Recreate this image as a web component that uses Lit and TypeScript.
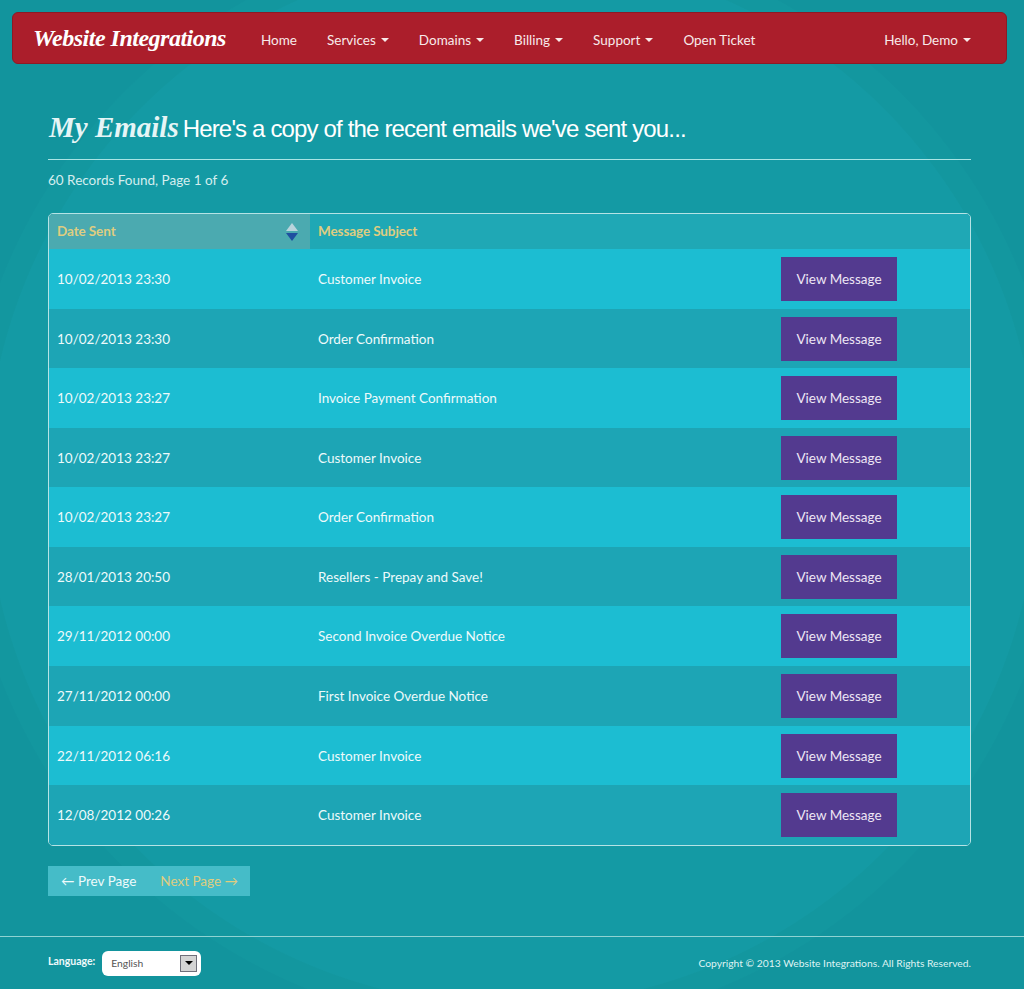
import { LitElement, html, css, svg } from "lit";
import { customElement } from "lit/decorators.js";

const rows = [
  ["10/02/2013 23:30", "Customer Invoice"],
  ["10/02/2013 23:30", "Order Confirmation"],
  ["10/02/2013 23:27", "Invoice Payment Confirmation"],
  ["10/02/2013 23:27", "Customer Invoice"],
  ["10/02/2013 23:27", "Order Confirmation"],
  ["28/01/2013 20:50", "Resellers - Prepay and Save!"],
  ["29/11/2012 00:00", "Second Invoice Overdue Notice"],
  ["27/11/2012 00:00", "First Invoice Overdue Notice"],
  ["22/11/2012 06:16", "Customer Invoice"],
  ["12/08/2012 00:26", "Customer Invoice"],
];

const navLeft: [string, boolean][] = [
  ["Home", false],
  ["Services", true],
  ["Domains", true],
  ["Billing", true],
  ["Support", true],
  ["Open Ticket", false],
];

@customElement("app-root")
export class AppRoot extends LitElement {
  static styles = css`
    :host {
      display: block;
      position: relative;
      height: 989px;
      overflow: hidden;
      font-family: Lato, "Open Sans", sans-serif;
      font-size: 13.5px;
      color: #fff;
      background-color: #13949e;
      background-image:
        radial-gradient(circle at 512px 480px, #149aa4 0, #149aa4 525px, #13979f 526px, #13979f 548px, #12949d 549px);
    }
    * { box-sizing: border-box; }
    .navbar, .main, footer { position: relative; }
    .navbar {
      display: flex;
      align-items: center;
      height: 52px;
      margin: 12px 17px 0 12px;
      padding: 0 35px 0 20px;
      background: #ab1e2b;
      border: 1px solid #8d1a25;
      border-radius: 6px;
    }
    .brand {
      font-family: "Liberation Serif", serif;
      font-weight: bold;
      font-style: italic;
      font-size: 24px;
      letter-spacing: -0.5px;
      width: 213px;
      white-space: nowrap;
    }
    .links { display: flex; flex: 1; padding-top: 4px; }
    .link {
      display: flex;
      align-items: center;
      padding: 0 15px;
      color: #f8eaea;
      white-space: nowrap;
    }
    .hello { padding-right: 0; }
    .spacer { flex: 1; }
    .caret {
      width: 0;
      height: 0;
      margin-left: 5px;
      border-left: 4px solid transparent;
      border-right: 4px solid transparent;
      border-top: 4px solid #f8eaea;
    }
    .main { padding: 0 53px 0 48px; }
    h1 {
      display: flex;
      align-items: baseline;
      gap: 5px;
      margin: 0;
      padding-top: 47px;
      height: 96px;
      border-bottom: 1px solid #a9e4e4;
      font-weight: normal;
      white-space: nowrap;
    }
    .title {
      font-family: "Liberation Serif", serif;
      font-weight: bold;
      font-style: italic;
      font-size: 29px;
      color: #e6f5f6;
      margin-left: 1px;
      margin-right: -1px;
    }
    .sub {
      font-family: "Liberation Sans", Arial, sans-serif;
      font-size: 24px;
      letter-spacing: -0.84px;
    }
    .count { margin: 12px 0 24px; line-height: 17px; color: #d5eeef; }
    .tbl {
      border: 1px solid #b5e3e5;
      border-radius: 5px;
      overflow: hidden;
    }
    table { width: 100%; border-collapse: collapse; table-layout: fixed; }
    th {
      height: 35px;
      padding: 0 8px 2px;
      text-align: left;
      font-weight: bold;
      letter-spacing: -0.1px;
      color: #dfcd80;
      background: #1fa8b5;
    }
    th.sorted { background: #4baab0; position: relative; }
    th.sorted svg { position: absolute; right: 12px; top: 9px; }
    td { padding: 0 8px; color: #eefafb; }
    tr.odd td { height: 60px; background: #1cbdd2; }
    tr.even td { height: 59px; background: #1da5b5; }
    tbody tr:nth-child(8) td, tbody tr:nth-child(10) td { height: 60px; }
    tbody tr:nth-child(9) td { height: 59px; }
    .c1 { width: 261px; }
    .c2 { width: 463px; }
    td.act { padding-top: 8px; vertical-align: top; }
    .btn {
      display: flex;
      align-items: center;
      justify-content: center;
      width: 116px;
      height: 44px;
      color: #eee6f5;
      background: #533a8f;
    }
    .pager {
      display: inline-flex;
      align-items: center;
      gap: 24px;
      height: 30px;
      margin-top: 20px;
      padding: 0 12px 0 13px;
      background: #45bcc8;
      color: #eefafb;
      vertical-align: top;
    }
    .next { color: #dfcd80; }
    footer {
      display: flex;
      align-items: center;
      margin-top: 40px;
      height: 53px;
      padding: 0 53px 0 48px;
      border-top: 1px solid #8fd3d2;
      font-size: 10.3px;
    }
    .lang { font-weight: bold; font-size: 10.5px; margin-right: 7px; margin-top: -4px; color: #eefafb; }
    .select {
      display: flex;
      align-items: center;
      justify-content: space-between;
      width: 99px;
      height: 25px;
      padding: 0 4px 0 9px;
      background: #fff;
      border-radius: 6px;
      color: #555;
    }
    .drop {
      display: flex;
      align-items: center;
      justify-content: center;
      width: 17px;
      height: 17px;
      background: #d4d4d4;
      border: 1px solid #6f6f7a;
    }
    .drop i {
      width: 0;
      height: 0;
      border-left: 4px solid transparent;
      border-right: 4px solid transparent;
      border-top: 4px solid #000;
    }
    .copy { margin-left: auto; color: #dff3f3; }
  `;

  render() {
    return html`
      <nav class="navbar">
        <div class="brand">Website Integrations</div>
        <div class="links">
          ${navLeft.map(
            ([t, c]) => html`<div class="link">${t}${c ? html`<span class="caret"></span>` : ""}</div>`
          )}
          <div class="spacer"></div>
          <div class="link hello">Hello, Demo<span class="caret"></span></div>
        </div>
      </nav>
      <div class="main">
        <h1><span class="title">My Emails</span><span class="sub">Here's a copy of the recent emails we've sent you...</span></h1>
        <p class="count">60 Records Found, Page 1 of 6</p>
        <div class="tbl">
          <table>
            <thead>
              <tr>
                <th class="c1 sorted">Date Sent
                  <svg width="12" height="18" viewBox="0 0 12 18">
                    ${svg`<path d="M6 0 L12 8 H0 Z" fill="#b9d4dc"/><path d="M0 10 H12 L6 18 Z" fill="#1f4fa0"/>`}
                  </svg>
                </th>
                <th class="c2">Message Subject</th>
                <th></th>
              </tr>
            </thead>
            <tbody>
              ${rows.map(
                (r, i) => html`<tr class=${i % 2 ? "even" : "odd"}>
                  <td>${r[0]}</td>
                  <td>${r[1]}</td>
                  <td class="act"><div class="btn">View Message</div></td>
                </tr>`
              )}
            </tbody>
          </table>
        </div>
        <div class="pager"><span>← Prev Page</span><span class="next">Next Page →</span></div>
      </div>
      <footer>
        <span class="lang">Language:</span>
        <div class="select">English<span class="drop"><i></i></span></div>
        <span class="copy">Copyright © 2013 Website Integrations. All Rights Reserved.</span>
      </footer>
    `;
  }
}
